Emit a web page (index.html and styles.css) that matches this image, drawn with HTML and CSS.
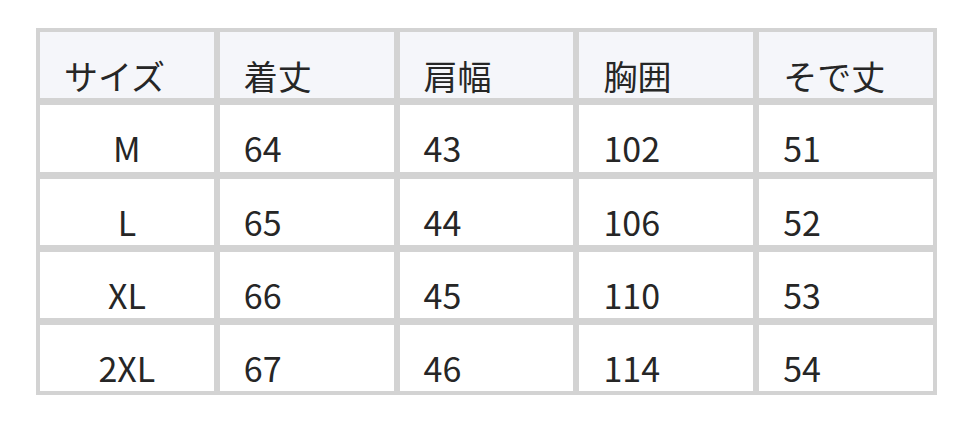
FILE: index.html
```html
<!DOCTYPE html>
<html lang="ja">
<head>
<meta charset="utf-8">
<title>サイズ表</title>
<link rel="stylesheet" href="styles.css">
</head>
<body>
<div class="page">
  <div class="size-table">
    <div class="cell head">サイズ</div>
    <div class="cell head">着丈</div>
    <div class="cell head">肩幅</div>
    <div class="cell head">胸囲</div>
    <div class="cell head">そで丈</div>

    <div class="cell size">M</div>
    <div class="cell">64</div>
    <div class="cell">43</div>
    <div class="cell">102</div>
    <div class="cell">51</div>

    <div class="cell size">L</div>
    <div class="cell">65</div>
    <div class="cell">44</div>
    <div class="cell">106</div>
    <div class="cell">52</div>

    <div class="cell size">XL</div>
    <div class="cell">66</div>
    <div class="cell">45</div>
    <div class="cell">110</div>
    <div class="cell">53</div>

    <div class="cell size">2XL</div>
    <div class="cell">67</div>
    <div class="cell">46</div>
    <div class="cell">114</div>
    <div class="cell">54</div>
  </div>
</div>
</body>
</html>
```
FILE: styles.css
```css
html, body {
  margin: 0;
  padding: 0;
  background: #ffffff;
}

.page {
  padding: 28px 0 0 36px;
}

.size-table {
  width: 901px;
  box-sizing: border-box;
  display: grid;
  grid-template-columns: repeat(5, 1fr);
  grid-template-rows: 66px 67px 66px 66px 66px;
  column-gap: 6px;
  row-gap: 7px;
  padding: 4px;
  background: #d3d3d3;
  font-family: "Noto Sans CJK JP", "Noto Sans", sans-serif;
  font-size: 34px;
  line-height: 34px;
  color: #262626;
}

.cell {
  background: #ffffff;
  padding: 26px 0 0 24px;
  box-sizing: border-box;
  white-space: nowrap;
}

.cell.head {
  background: #f5f6fa;
  padding-top: 27px;
}

.cell.size {
  padding-left: 0;
  text-align: center;
}
```
